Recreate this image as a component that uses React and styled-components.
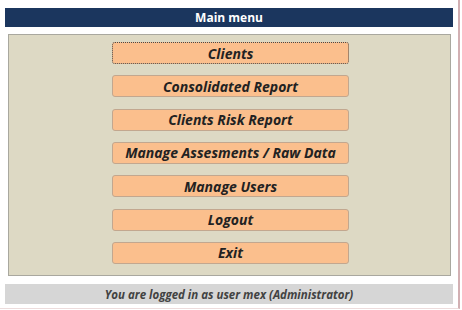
import styled, { createGlobalStyle } from "styled-components";

const GlobalStyle = createGlobalStyle`
  html, body {
    margin: 0;
    padding: 0;
    background: #ffffff;
  }
  body {
    font-family: "Open Sans", Lato, "Liberation Sans", sans-serif;
  }
`;

const Frame = styled.div`
  width: 460px;
  height: 309px;
  box-sizing: border-box;
  border-right: 2px solid #d2b0b3;
  border-bottom: 1px solid #ecdcdc;
  padding: 8px 0 0 5px;
  display: flex;
  flex-direction: column;
`;

const Header = styled.div`
  width: 448px;
  height: 19px;
  background: #1b365e;
  color: #ffffff;
  font-weight: 700;
  font-size: 12px;
  display: flex;
  align-items: center;
  justify-content: center;
`;

const Panel = styled.div`
  margin: 7px 0 0 3px;
  width: 443px;
  height: 242px;
  box-sizing: border-box;
  background: #ddd9c4;
  border: 1px solid #a9a89f;
  padding: 7px 0 0;
  display: flex;
  flex-direction: column;
  align-items: center;
  gap: 11.33px;
`;

const MenuButton = styled.button`
  width: 237px;
  height: 22px;
  box-sizing: border-box;
  margin-left: 2px;
  background: #fbbf8d;
  border: 1px ${({ $focused }) => ($focused ? "dotted #4a4a4a" : "solid #c2a78f")};
  border-radius: 3px;
  font-family: "Open Sans", Lato, "Liberation Sans", sans-serif;
  font-style: italic;
  font-weight: 700;
  font-size: 14px;
  color: #222222;
  padding: 0;
  display: flex;
  align-items: center;
  justify-content: center;
  cursor: pointer;
`;

const Footer = styled.div`
  margin-top: 8px;
  width: 448px;
  height: 20px;
  background: #d6d6d6;
  color: #424242;
  font-style: italic;
  font-weight: 700;
  font-size: 11.5px;
  display: flex;
  align-items: center;
  justify-content: center;
`;

const items = [
  "Clients",
  "Consolidated Report",
  "Clients Risk Report",
  "Manage Assesments / Raw Data",
  "Manage Users",
  "Logout",
  "Exit",
];

export default function App() {
  return (
    <>
      <GlobalStyle />
      <Frame>
        <Header>Main menu</Header>
        <Panel>
          {items.map((label, i) => (
            <MenuButton key={label} $focused={i === 0}>
              {label}
            </MenuButton>
          ))}
        </Panel>
        <Footer>You are logged in as user mex (Administrator)</Footer>
      </Frame>
    </>
  );
}
